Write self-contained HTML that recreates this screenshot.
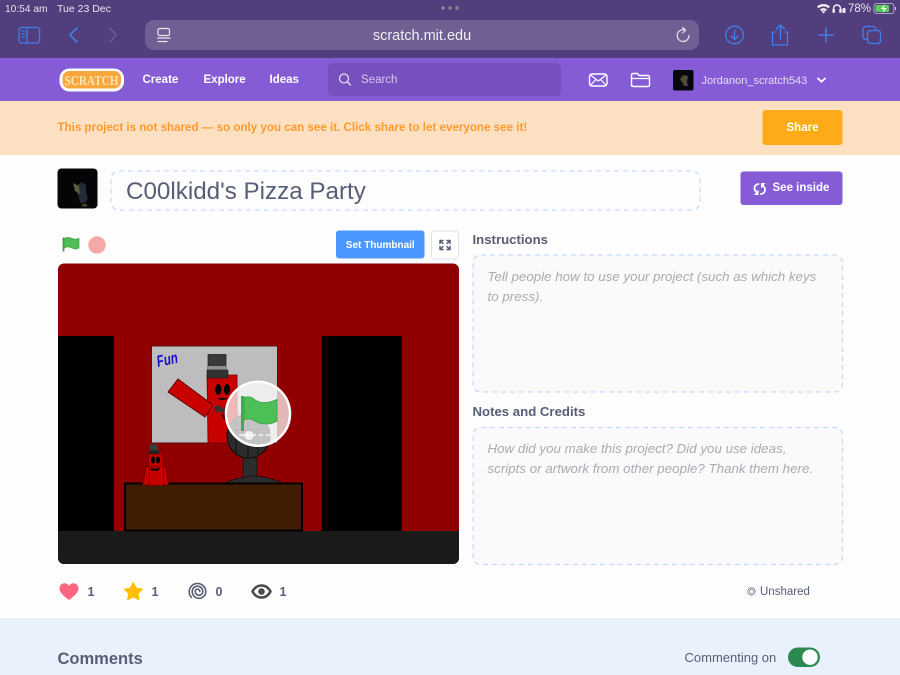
<!DOCTYPE html>
<html lang="en"><head><meta charset="utf-8"><title>C00lkidd's Pizza Party</title>
<style>
html,body{margin:0;padding:0;width:900px;height:675px;overflow:hidden;background:#fdfdfe}
body{position:relative;font-family:"Liberation Sans",sans-serif;color:#575e75}
.a{position:absolute;white-space:nowrap}
svg{position:absolute;overflow:visible}
.b{font-weight:bold}
</style></head><body>
<div class="a" style="left:0;top:0;width:900px;height:58px;background:#523e7c"></div>
<div class="a" style="left:0;top:58px;width:900px;height:43px;background:#855cd6"></div>
<div class="a" style="left:0;top:101px;width:900px;height:54px;background:#fde0c1"></div>
<div class="a" style="left:0;top:618px;width:900px;height:57px;background:#e9f1fc"></div>

<div class="a" style="left:5px;top:2.500px;font-size:10.200px;line-height:13px;color:#e8e4f0">10:54 am</div>
<div class="a" style="left:57px;top:2.500px;font-size:10.500px;line-height:13px;color:#e8e4f0">Tue 23 Dec</div>
<div class="a" style="left:848px;top:2.500px;font-size:11.500px;line-height:13px;color:#e8e4f0">78%</div>
<div class="a" style="left:145px;top:20px;width:554px;height:30px;border-radius:9px;background:#705f92"></div>
<div class="a" style="left:145px;top:26.500px;width:554px;text-align:center;font-size:14.500px;line-height:18px;color:#f0eef5">scratch.mit.edu</div>

<svg style="left:0;top:0" width="900" height="675" viewBox="0 0 900 675" fill="none">
<g fill="#8a8694"><circle cx="443" cy="8" r="1.700"/><circle cx="450" cy="8" r="1.700"/><circle cx="457" cy="8" r="1.700"/></g>
<g stroke="#3f80ea" stroke-width="1.300" stroke-linecap="round" stroke-linejoin="round">
<rect x="19" y="27.500" width="20.500" height="15.500" rx="2.500"/><path d="M27 27.500V43M22 31h2.500M22 34h2.500M22 37h2.500"/>
<path d="M77 28l-7 7 7 7" stroke-width="1.600"/>
<circle cx="734.500" cy="35" r="8.800"/><path d="M734.500 30v9M731 36l3.500 3.500 3.500-3.500"/>
<path d="M775 32h-2.500v13h15V32H785M780.500 39V25.500M776.500 29l4-4 4 4"/>
<path d="M826 28v14M819 35h14" stroke-width="1.500"/>
<rect x="863" y="26.500" width="13" height="13" rx="3"/><rect x="867.500" y="30.500" width="13" height="13" rx="3" fill="#523e7c"/>
</g>
<path d="M110 28l6 7-6 7" stroke="#6c5c90" stroke-width="1.400" stroke-linecap="round" stroke-linejoin="round"/>
<g stroke="#e8e4f0" stroke-width="1.200" stroke-linecap="round">
<rect x="158" y="28.500" width="11.500" height="7" rx="1.500"/><path d="M157.500 38h12.500M158 41.500h9"/>
<path d="M689 35.500a5.900 5.900 0 1 1-3.500-5.300M682.500 27.500l3 2.700-2.800 2.800"/>
</g>
<path d="M817 6.500c4-3.300 9-3.300 13 0l-1.500 1.700c-3.100-2.500-6.900-2.500-10 0zM820 9.500c2.300-1.800 4.700-1.800 7 0l-1.500 1.700c-1.300-1-2.700-1-4 0zM823.500 13.500l-1.800-1.800c1.100-.7 2.500-.7 3.600 0z" fill="#f2f0f6"/>
<path d="M833.500 12V8.500a3.500 3.500 0 0 1 7 0V12" stroke="#f2f0f6" stroke-width="1.400"/><rect x="832.500" y="9" width="2.400" height="3.800" fill="#f2f0f6"/><rect x="839.300" y="9" width="2.400" height="3.800" fill="#f2f0f6"/><rect x="842.500" y="8" width="3" height="5" rx="1" fill="#f2f0f6"/>
<rect x="874" y="3.500" width="20" height="10" rx="2.500" stroke="#c9c4d4" stroke-width=".8"/><rect x="875.500" y="5" width="13.500" height="7" rx="1" fill="#5fcc5f"/><path d="M885 3.500l-4 5.500h3l-1.500 4.500 4-5.500h-3z" fill="#fff"/><rect x="895" y="7" width="1" height="3" fill="#c9c4d4"/>

<!-- scratch logo -->
<rect x="59.500" y="68.500" width="64.500" height="23" rx="10" fill="#fff"/>
<rect x="62.500" y="71" width="58.500" height="17.500" rx="7" fill="#f9a63c"/>
<text x="64.500" y="85" textLength="54" lengthAdjust="spacingAndGlyphs" font-family="Liberation Serif, serif" font-weight="bold" font-size="14" fill="#ffe6b8">SCRATCH</text>

<!-- nav icons -->
<rect x="328" y="63" width="233" height="33" rx="5" fill="#7650bd"/>
<circle cx="344" cy="78.500" r="4.500" stroke="#e8e0f6" stroke-width="1.200"/><path d="M347.500 82l3 3" stroke="#e8e0f6" stroke-width="1.400" stroke-linecap="round"/>
<rect x="589.500" y="74" width="17.500" height="12" rx="2.500" stroke="#fff" stroke-width="1.400"/><path d="M590.500 75l7.800 6 7.800-6M590.500 85l5.500-5.500M606 85l-5.500-5.500" stroke="#fff" stroke-width="1.200"/>
<path d="M631.500 86.500V75a1.500 1.500 0 0 1 1.500-1.500h4.500l1.500 2h9a1.500 1.500 0 0 1 1.500 1.500v8a1.500 1.500 0 0 1-1.500 1.500h-14.500a1.500 1.500 0 0 1-1.500-1.500z" stroke="#fff" stroke-width="1.400"/><path d="M631.500 78.500h18.500" stroke="#fff" stroke-width="1.200"/>
<rect x="673" y="70" width="20.500" height="20.500" rx="2" fill="#07060a"/><path d="M683 75l5 1-1 6 1 4h-4l-2-4-2-3z" fill="#5f5c40" opacity=".8"/><path d="M818 78.500l3.500 3.200 3.500-3.200" stroke="#fff" stroke-width="1.800" stroke-linecap="round" stroke-linejoin="round"/>

<!-- share / see inside -->
<rect x="762.500" y="110" width="80" height="35" rx="3" fill="#ffab19"/>
<rect x="740.500" y="171.500" width="102" height="33.500" rx="3" fill="#855cd6"/>
<path d="M758.500 184c-2.800.3-4 2.200-4 4.300 0 1.800.9 3 2.200 3.800M761 194c2.800-.3 4-2.200 4-4.300 0-1.800-.9-3-2.200-3.800" stroke="#fff" stroke-width="1.800" stroke-linecap="round"/>
<path d="M758.500 189.500v5.500h-4.500zM761 188.500v-5.500h4.500z" fill="#fff"/>

<!-- dashed boxes -->
<g stroke="#c8dcfa" stroke-width="1.300" stroke-dasharray="5 4">
<rect x="111" y="171" width="589" height="39" rx="8"/>
<rect x="473" y="255" width="369.500" height="137" rx="8" fill="#fafafb"/>
<rect x="473" y="427.500" width="369.500" height="137" rx="8" fill="#fafafb"/>
</g>

<!-- thumb -->
<rect x="57.500" y="168.500" width="40" height="40" rx="4" fill="#050507"/>
<path d="M76 186l6-4 4 3 0 8 2 5-3 5h-5l-1-6-3-6z" fill="#252a38"/><path d="M73 183l6 3 1 8-5-3z" fill="#5c5c3a"/><path d="M82 204h5v2.500h-5z" fill="#4a4818"/>

<!-- controls -->
<path d="M63.500 237.500v14" stroke="#45993d" stroke-width="1.800"/><path d="M64 238.500c3-1.800 5.500-1.200 8 0s4.500 1 7 0v9.500c-2.500 1.300-4.800 1.300-7 0s-5-1.600-8 0z" fill="#4cbf56" stroke="#45993d" stroke-width=".7"/>
<circle cx="97" cy="245" r="8.700" fill="#f5a8a8"/>
<rect x="336" y="230.500" width="88.500" height="28" rx="3" fill="#4c97ff"/>
<rect x="431.500" y="231" width="27" height="28" rx="3" fill="#fff" stroke="#dfe1e6"/>
<g stroke="#575e75" stroke-width="1.500" stroke-linecap="round" stroke-linejoin="round"><path d="M440 240.500l3 3M440 240.500h3M440 240.500v3M450 240.500l-3 3M450 240.500h-3M450 240.500v3M440 249.500l3-3M440 249.500h3M440 249.500v-3M450 249.500l-3-3M450 249.500h-3M450 249.500v-3"/></g>

<!-- stage -->
<defs><clipPath id="st"><rect x="58" y="263.500" width="401" height="300.500" rx="6"/></clipPath></defs>
<g clip-path="url(#st)">
<rect x="58" y="263" width="401" height="302" fill="#900000"/>
<rect x="58" y="336" width="56" height="195" fill="#000"/>
<rect x="321.700" y="336" width="80" height="195" fill="#000"/>
<rect x="58" y="531" width="401" height="34" fill="#1a1a1a"/>
<rect x="151.500" y="346" width="126" height="97" fill="#bdbdbd" stroke="#5c1010" stroke-width="1"/>
<rect x="208" y="354.500" width="18" height="16" fill="#3a3a3a" stroke="#1b1b1b" stroke-width=".7"/>
<rect x="208" y="366" width="18" height="4" fill="#8f8f8f"/>
<path d="M207 375h30v3l.5 65H208z" fill="#c80000" stroke="#6d0000" stroke-width=".8"/>
<rect x="207" y="370" width="21" height="8" fill="#333" stroke="#1b1b1b" stroke-width=".6"/>
<path d="M178 379l35 26-8 12-37-25z" fill="#c80000" stroke="#5a0000" stroke-width=".9"/>
<ellipse cx="218.300" cy="389.500" rx="3" ry="5.500" fill="#000"/><ellipse cx="227" cy="389.500" rx="3" ry="5.500" fill="#000"/>
<path d="M217 398c3 2.500 8 2.500 11 0z" fill="#000"/>
<path d="M214 407l6-2 2 4 4-3 2 5-6 2-3-2-3 2z" fill="#333"/>
<path d="M221 415l6-3 2 5-4 4z" fill="#500"/>
<ellipse cx="248.500" cy="436" rx="21.500" ry="22" fill="#2c2c2c" stroke="#0c0c0c" stroke-width="1"/>
<path d="M236 420v36M248 415v43M258 417v38M228 430h41" stroke="#111" stroke-width="1"/>
<rect x="243" y="458" width="14" height="20" fill="#2d2d2d" stroke="#111" stroke-width=".7"/>
<path d="M222 484c14-6 28-8 31-8 8 0 22 3 31 8z" fill="#2d2d2d" stroke="#111" stroke-width=".7"/>
<rect x="125" y="483.500" width="177" height="47" fill="#401d02" stroke="#060201" stroke-width="2"/>
<path d="M146 466h5l-.5 19h-8z" fill="#c20000" stroke="#5e0000" stroke-width=".8"/>
<path d="M163 466h3l2.500 19h-6z" fill="#c20000" stroke="#5e0000" stroke-width=".8"/>
<rect x="149.500" y="466" width="14" height="19.500" fill="#c60000" stroke="#5e0000" stroke-width=".7"/>
<rect x="149.500" y="444.500" width="8.500" height="7" fill="#3b3b3b"/><rect x="148.500" y="450.500" width="10.500" height="4" fill="#222"/>
<rect x="148.500" y="454" width="14.500" height="12.500" fill="#c00000" stroke="#6d0000" stroke-width=".5"/>
<ellipse cx="153" cy="460" rx="2" ry="3.500" fill="#000"/><ellipse cx="158" cy="460" rx="2" ry="3.500" fill="#000"/>
<path d="M150 467l5 1.500 5-1.500-1 4h-8z" fill="#3a0000"/>
<circle cx="258" cy="413.800" r="32" fill="#fff" fill-opacity=".72" stroke="#fff" stroke-width="2.500"/>
<path d="M239 435h10M252 435h4M259 435h4M266 435h5" stroke="#fff" stroke-width="1.200"/><circle cx="249" cy="435.500" r="4.500" fill="#fff" fill-opacity=".8"/>
<path d="M242.500 396v35" stroke="#45a84f" stroke-width="3"/>
<path d="M244 397.500c5-1.500 8-.5 11 2.500 6 4 15 3 22-.5v21.500c-6 4-15 3.800-22 0-4-2.200-8-3-11-1z" fill="#4cbf56" stroke="#45a84f" stroke-width="1"/>
</g>

<!-- social -->
<path d="M69 600c-3-2.500-9.500-6.500-9.500-11.500 0-3 2.300-5.200 5-5.200 1.900 0 3.500 1 4.500 2.600 1-1.600 2.600-2.600 4.500-2.600 2.700 0 5 2.200 5 5.200 0 5-6.500 9-9.500 11.500z" fill="#ff6680"/>
<path d="M133.300 582.500l2.900 5.600 6.200 1-4.500 4.400 1.100 6.300-5.700-3-5.700 3 1.100-6.300-4.500-4.400 6.200-1z" fill="#ffbf00" stroke="#ffbf00" stroke-linejoin="round" stroke-width="1"/>
<path d="M191.500 597.500A8.300 8.300 0 1 1 205.800 591.500A6.800 6.800 0 0 1 192.200 591.500A5.300 5.300 0 0 1 202.800 591.500A3.800 3.800 0 0 1 195.200 591.500A2.300 2.300 0 0 1 199.800 591.500" stroke="#575e75" stroke-width="1.600" stroke-linecap="round"/>
<path d="M252.500 591.500c2-3.800 5.400-6 9-6s7 2.200 9 6c-2 3.800-5.400 6-9 6s-7-2.200-9-6z" stroke="#4b4b4b" stroke-width="2.500"/><circle cx="261.500" cy="591.500" r="3.300" fill="#4b4b4b"/>
<circle cx="751.500" cy="591.500" r="3.700" stroke="#6c7086" stroke-width=".8"/><circle cx="751.500" cy="591.500" r="2" stroke="#6c7086" stroke-width=".7"/>
<rect x="788" y="647.500" width="32" height="19.500" rx="9.750" fill="#2c8a50"/><circle cx="810" cy="657.200" r="7.700" fill="#fff"/>
</svg>

<div class="a b" style="left:142.500px;top:72.500px;font-size:11.500px;line-height:14px;color:#fff">Create</div>
<div class="a b" style="left:203.500px;top:72.500px;font-size:11.500px;line-height:14px;color:#fff">Explore</div>
<div class="a b" style="left:269.500px;top:72.500px;font-size:11.500px;line-height:14px;color:#fff">Ideas</div>
<div class="a" style="left:361px;top:72.500px;font-size:11.500px;line-height:14px;color:#d5c8ef">Search</div>
<div class="a" style="left:701.500px;top:74px;font-size:11px;line-height:14px;color:#e6def5">Jordanon_scratch543</div>

<div class="a b" style="left:57.500px;top:121px;font-size:11.600px;line-height:14px;color:#ff9a2e">This project is not shared — so only you can see it. Click share to let everyone see it!</div>
<div class="a b" style="left:762.500px;top:120.500px;width:80px;text-align:center;font-size:11.500px;line-height:14px;color:#fff">Share</div>

<div class="a" style="left:126px;top:178px;font-size:24.200px;line-height:28px;color:#575e75">C00lkidd's Pizza Party</div>
<div class="a b" style="left:772.500px;top:181px;font-size:11.500px;line-height:14px;color:#fff">See inside</div>

<div class="a b" style="left:336px;top:238.500px;width:88.500px;text-align:center;font-size:10px;line-height:13px;color:#fff">Set Thumbnail</div>

<div class="a b" style="left:472.500px;top:232px;font-size:13.200px;line-height:15px;color:#575e75">Instructions</div>
<div class="a" style="left:487.500px;top:267px;font-size:13.350px;line-height:20px;font-style:italic;color:#a9abb2">Tell people how to use your project (such as which keys<br>to press).</div>
<div class="a b" style="left:472.500px;top:404px;font-size:13.200px;line-height:15px;color:#575e75">Notes and Credits</div>
<div class="a" style="left:487.500px;top:439px;font-size:13.350px;line-height:20px;font-style:italic;color:#a9abb2">How did you make this project? Did you use ideas,<br>scripts or artwork from other people? Thank them here.</div>

<div class="a b" style="left:87.500px;top:585px;font-size:12.500px;line-height:14px;color:#575e75">1</div>
<div class="a b" style="left:151.500px;top:585px;font-size:12.500px;line-height:14px;color:#575e75">1</div>
<div class="a b" style="left:215.500px;top:585px;font-size:12.500px;line-height:14px;color:#575e75">0</div>
<div class="a b" style="left:279.500px;top:585px;font-size:12.500px;line-height:14px;color:#575e75">1</div>
<div class="a" style="left:760px;top:584.500px;font-size:11.500px;line-height:14px;color:#575e75">Unshared</div>
<div class="a b" style="left:57.500px;top:649.500px;font-size:16.500px;line-height:19px;color:#575e75">Comments</div>
<div class="a" style="left:684.500px;top:650px;font-size:13px;line-height:15px;color:#575e75">Commenting on</div>
<div class="a" style="left:157px;top:354px;font-size:16px;line-height:17px;font-weight:bold;font-style:italic;color:#1410c8;transform:rotate(-12deg) scaleX(.72);transform-origin:left center">Fun</div>
</body></html>
